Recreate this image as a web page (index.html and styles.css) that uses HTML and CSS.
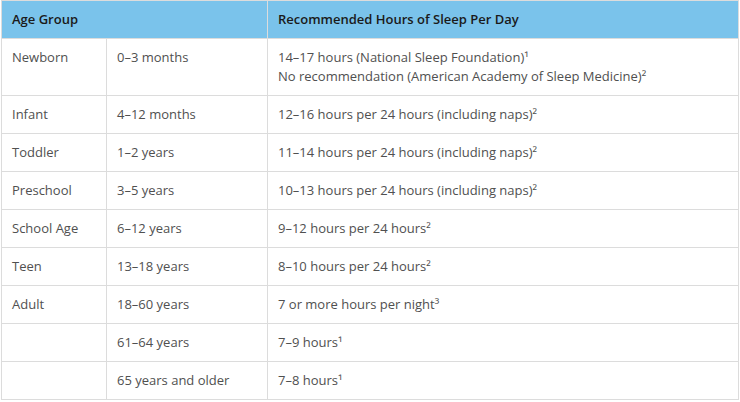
FILE: index.html
```html
<!DOCTYPE html>
<html>
<head>
<meta charset="utf-8">
<link rel="stylesheet" href="styles.css">
</head>
<body>
<table class="sleep">
  <colgroup>
    <col class="c1"><col class="c2"><col class="c3">
  </colgroup>
  <thead>
    <tr><th colspan="2">Age Group</th><th>Recommended Hours of Sleep Per Day</th></tr>
  </thead>
  <tbody>
    <tr><td>Newborn</td><td>0–3 months</td><td>14–17 hours (National Sleep Foundation)¹<br>No recommendation (American Academy of Sleep Medicine)²</td></tr>
    <tr><td>Infant</td><td>4–12 months</td><td>12–16 hours per 24 hours (including naps)²</td></tr>
    <tr><td>Toddler</td><td>1–2 years</td><td>11–14 hours per 24 hours (including naps)²</td></tr>
    <tr><td>Preschool</td><td>3–5 years</td><td>10–13 hours per 24 hours (including naps)²</td></tr>
    <tr><td>School Age</td><td>6–12 years</td><td>9–12 hours per 24 hours²</td></tr>
    <tr><td>Teen</td><td>13–18 years</td><td>8–10 hours per 24 hours²</td></tr>
    <tr><td>Adult</td><td>18–60 years</td><td>7 or more hours per night³</td></tr>
    <tr><td></td><td>61–64 years</td><td>7–9 hours¹</td></tr>
    <tr><td></td><td>65 years and older</td><td>7–8 hours¹</td></tr>
  </tbody>
</table>
</body>
</html>
```
FILE: styles.css
```css
html, body { margin: 0; padding: 0; background: #fff; }
body { padding: 0 0 0 1px; font-family: "Open Sans", "Liberation Sans", sans-serif; }
.sleep {
  border-collapse: collapse;
  width: 738px;
  table-layout: fixed;
  font-size: 13px;
  line-height: 19px;
  color: #505050;
}
.c1 { width: 105px; }
.c2 { width: 161px; }
.c3 { width: auto; }
.sleep th, .sleep td {
  border: 1px solid #dcdcdc;
  padding: 9px 10px;
  text-align: left;
  vertical-align: top;
}
.sleep th {
  background: #7ac3eb;
  color: #1a1a1a;
  font-weight: 600;
}
```
